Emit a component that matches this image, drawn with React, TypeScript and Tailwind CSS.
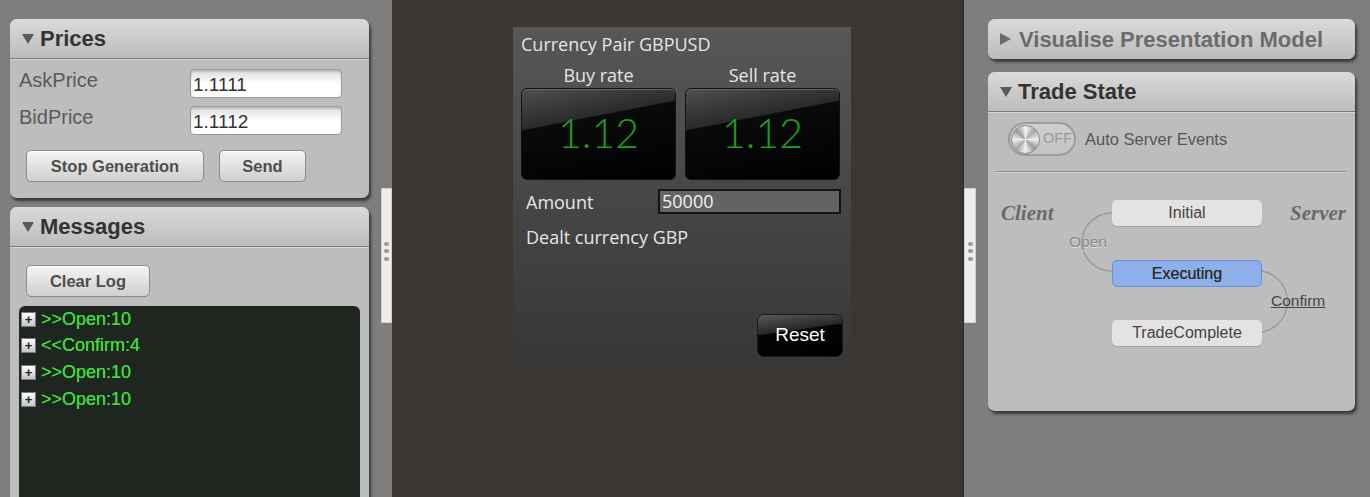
import type { ReactNode } from "react";

function Caret({ open }: { open: boolean }) {
  return open ? (
    <svg width="12" height="10" viewBox="0 0 12 10" className="mr-[6px] shrink-0">
      <polygon points="0,0 12,0 6,10" fill="#5a5a5a" />
    </svg>
  ) : (
    <svg width="11" height="12" viewBox="0 0 11 12" className="mr-[8px] shrink-0">
      <polygon points="0,0 11,6 0,12" fill="#6a6a6a" />
    </svg>
  );
}

function Panel({
  title,
  open = true,
  className = "",
  children,
}: {
  title: string;
  open?: boolean;
  className?: string;
  children?: ReactNode;
}) {
  return (
    <div
      className={`flex flex-col rounded-[7px] bg-[#bdbdbd] shadow-[2px_3px_3px_rgba(0,0,0,0.55)] ${className}`}
    >
      <div
        className={`flex h-[40px] shrink-0 items-center bg-gradient-to-b from-[#dadada] to-[#bcbcbc] px-[12px] ${
          open ? "rounded-t-[7px] border-b border-[#7c7c7c] shadow-[0_1px_0_#d6d6d6]" : "rounded-[7px]"
        }`}
      >
        <Caret open={open} />
        <span
          className={`text-[22px] font-bold ${open ? "text-[#333]" : "text-[#6b6b6b]"}`}
        >
          {title}
        </span>
      </div>
      {children}
    </div>
  );
}

function GreyButton({ label, w }: { label: string; w: string }) {
  return (
    <button
      className={`h-[32px] ${w} rounded-[5px] border border-[#8a8a8a] bg-gradient-to-b from-[#f4f4f4] to-[#cfcfcf] text-[16.5px] font-bold text-[#4e4e4e] shadow-[inset_0_1px_0_#fff]`}
    >
      {label}
    </button>
  );
}

function Field({ label, value }: { label: string; value: string }) {
  return (
    <div className="flex items-start">
      <div className="h-[22px] w-[171px] text-[20px] leading-[22px] text-[#5a5a5a]">{label}</div>
      <div className="flex h-[29px] w-[152px] items-end rounded-[4px] border border-[#9a9a9a] bg-gradient-to-b from-[#dcdcdc] via-white to-white pb-[2px] pl-[2px] text-[19px] leading-[20px] text-[#333] shadow-[inset_0_2px_2px_rgba(0,0,0,0.15)]">
        {value}
      </div>
    </div>
  );
}

function Handle() {
  return (
    <div className="flex h-[135px] flex-col items-center border border-[#cfcfcf] bg-[#eeeeee] pt-[53px]">
      <span className="h-[4px] w-[5px] rounded-full bg-[#9a9a9a]" />
      <span className="mt-[3px] h-[4px] w-[5px] rounded-full bg-[#9a9a9a]" />
      <span className="mt-[4px] h-[4px] w-[5px] rounded-full bg-[#9a9a9a]" />
    </div>
  );
}

const messages = [">>Open:10", "<<Confirm:4", ">>Open:10", ">>Open:10"];

function RateBox({ label }: { label: string }) {
  return (
    <div className="flex w-[155px] flex-col">
      <div className="h-[22px] text-center text-[18px] leading-[18px] text-[#e6e6e6]">{label}</div>
      <div className="flex h-[92px] items-center justify-center rounded-[6px] border border-[#111] bg-[linear-gradient(169deg,#505050_0%,#2a2a2a_34%,#0a0a0a_35%,#000_100%)] shadow-[inset_0_1px_0_#666]">
        <span className="pb-[2px] font-['Lato',sans-serif] text-[41px] font-light text-[#1d9e1d]">
          1.12
        </span>
      </div>
    </div>
  );
}

export default function App() {
  return (
    <div className="flex h-[497px] w-[1370px] overflow-hidden font-['Liberation_Sans',Arial,sans-serif]">
      {/* left sidebar */}
      <div className="flex w-[392px] shrink-0 bg-[#7e7e7e]">
        <div className="flex w-[381px] flex-col gap-[9px] pl-[10px] pr-[12px] pt-[19px]">
          <Panel title="Prices" className="h-[179px] shrink-0">
            <div className="flex flex-col px-[9px] pt-[10px]">
              <Field label="AskPrice" value="1.1111" />
              <div className="mt-[8px]">
                <Field label="BidPrice" value="1.1112" />
              </div>
              <div className="ml-[7px] mt-[15px] flex gap-[15px]">
                <GreyButton label="Stop Generation" w="w-[178px]" />
                <GreyButton label="Send" w="w-[87px]" />
              </div>
            </div>
          </Panel>
          <Panel title="Messages" className="h-[330px] shrink-0">
            <div className="flex flex-1 flex-col px-[9px] pt-[18px]">
              <div className="ml-[7px]">
                <GreyButton label="Clear Log" w="w-[124px]" />
              </div>
              <div className="mt-[9px] flex-1 rounded-t-[6px] bg-[#1f261f] pl-[2px]">
                {messages.map((m, i) => (
                  <div key={i} className="flex h-[26.6px] items-center">
                    <span className="flex h-[15px] w-[15px] shrink-0 items-center justify-center border border-[#7a7a7a] bg-gradient-to-b from-white to-[#c4c4c4] text-[13px] font-bold leading-none text-[#222]">
                      +
                    </span>
                    <span className="ml-[5px] text-[18px] text-[#3fdc3f] [text-shadow:0_0_0.5px_#3fdc3f]">{m}</span>
                  </div>
                ))}
              </div>
            </div>
          </Panel>
        </div>
        <div className="w-[11px] pt-[188px]">
          <Handle />
        </div>
      </div>

      {/* centre */}
      <div className="flex-1 bg-[#3b3631] pl-[121px] pt-[27px]">
        <div className="flex h-[345px] w-[338px] flex-col bg-gradient-to-b from-[#575757] to-[#363636] pl-[8px] pr-[8px] pt-[6px] font-['Open_Sans',sans-serif]">
          <div className="text-[18px] leading-[22px] text-[#e6e6e6]">Currency Pair GBPUSD</div>
          <div className="mt-[11px] flex gap-[9px]">
            <RateBox label="Buy rate" />
            <RateBox label="Sell rate" />
          </div>
          <div className="mt-[9px] flex items-center pl-[5px]">
            <div className="w-[132px] text-[18px] leading-[22px] text-[#e6e6e6]">Amount</div>
            <div className="flex h-[25px] w-[183px] items-center border-2 border-[#151515] bg-[#636363] pl-[2px] text-[18px] text-[#f2f2f2]">
              50000
            </div>
          </div>
          <div className="mt-[12px] pl-[5px] text-[18px] leading-[22px] text-[#e6e6e6]">Dealt currency GBP</div>
          <div className="mt-auto flex justify-end pb-[15px]">
            <button className="h-[43px] w-[86px] rounded-[7px] border border-[#1a1a1a] bg-[linear-gradient(172deg,#5a5a5a_0%,#262626_38%,#050505_39%,#000_100%)] font-['Liberation_Sans',Arial,sans-serif] text-[19px] text-white">
              Reset
            </button>
          </div>
        </div>
      </div>

      {/* right sidebar */}
      <div className="flex w-[407px] shrink-0 bg-[#7e7e7e]">
        <div className="w-[13px] border-l border-[#2c2a27] pt-[188px]">
          <Handle />
        </div>
        <div className="ml-[12px] flex w-[367px] flex-col gap-[13px] pt-[19px]">
          <Panel title="Visualise Presentation Model" open={false} className="h-[40px] shrink-0" />
          <Panel title="Trade State" className="h-[339px] shrink-0">
            <div className="flex flex-col px-[8px] pt-[10px]">
              <div className="flex items-center pl-[12px]">
                <div className="flex h-[34px] w-[68px] items-center rounded-full border-2 border-[#9c9c9c] bg-gradient-to-b from-[#cfcfcf] to-[#c4c4c4] pl-[1px]">
                  <span className="h-[29px] w-[29px] rounded-full border border-[#8a8a8a] bg-[conic-gradient(#f2f2f2,#a8a8a8,#eeeeee,#9c9c9c,#f2f2f2,#a8a8a8,#eeeeee,#9c9c9c,#f2f2f2)]" />
                  <span className="ml-[3px] text-[14.5px] text-[#9a9a9a]">OFF</span>
                </div>
                <span className="ml-[9px] text-[16.5px] text-[#555]">Auto Server Events</span>
              </div>
              <div className="mr-[1px] mt-[15px] h-[2px] border-b border-t border-[#8c8c8c] border-b-[#d0d0d0]" />
              <div className="relative mt-[27px] h-[160px]">
                <svg className="absolute left-0 top-0" width="351" height="160" viewBox="0 0 351 160">
                  <path d="M116 13 A30 29 0 0 0 116 71" fill="none" stroke="#9a9a9a" strokeWidth="1.5" />
                  <path d="M266 71 A31 31 0 0 1 266 132" fill="none" stroke="#9a9a9a" strokeWidth="1.5" />
                </svg>
                <span className="absolute left-[5px] top-[-2px] font-['Liberation_Serif',serif] text-[21px] font-bold italic text-[#6a6a6a]">
                  Client
                </span>
                <span className="absolute right-[1px] top-[-2px] font-['Liberation_Serif',serif] text-[21px] font-bold italic text-[#6a6a6a]">
                  Server
                </span>
                <span className="absolute left-[73px] top-[30px] text-[15.5px] text-[#8a8a8a] [text-shadow:0_1px_0_#dcdcdc]">
                  Open
                </span>
                <span className="absolute left-[275px] top-[89px] text-[15.5px] text-[#444] underline">Confirm</span>
                <div className="relative ml-[116px] flex w-[150px] flex-col gap-[34px]">
                  <div className="flex h-[26px] items-center justify-center rounded-[5px] bg-[#e3e3e3] text-[16px] text-[#4a4040] shadow-[0_1px_1px_rgba(0,0,0,0.15)]">
                    Initial
                  </div>
                  <div className="flex h-[27px] items-center justify-center rounded-[5px] border border-[#6d90d4] bg-[#8eb0ea] text-[16px] text-[#2e2e2e] [text-shadow:0_0_0.4px_#2e2e2e]">
                    Executing
                  </div>
                  <div className="-mt-[1px] flex h-[26px] items-center justify-center rounded-[5px] bg-[#e3e3e3] text-[16px] text-[#4a4040] shadow-[0_1px_1px_rgba(0,0,0,0.15)]">
                    TradeComplete
                  </div>
                </div>
              </div>
            </div>
          </Panel>
        </div>
      </div>
    </div>
  );
}
